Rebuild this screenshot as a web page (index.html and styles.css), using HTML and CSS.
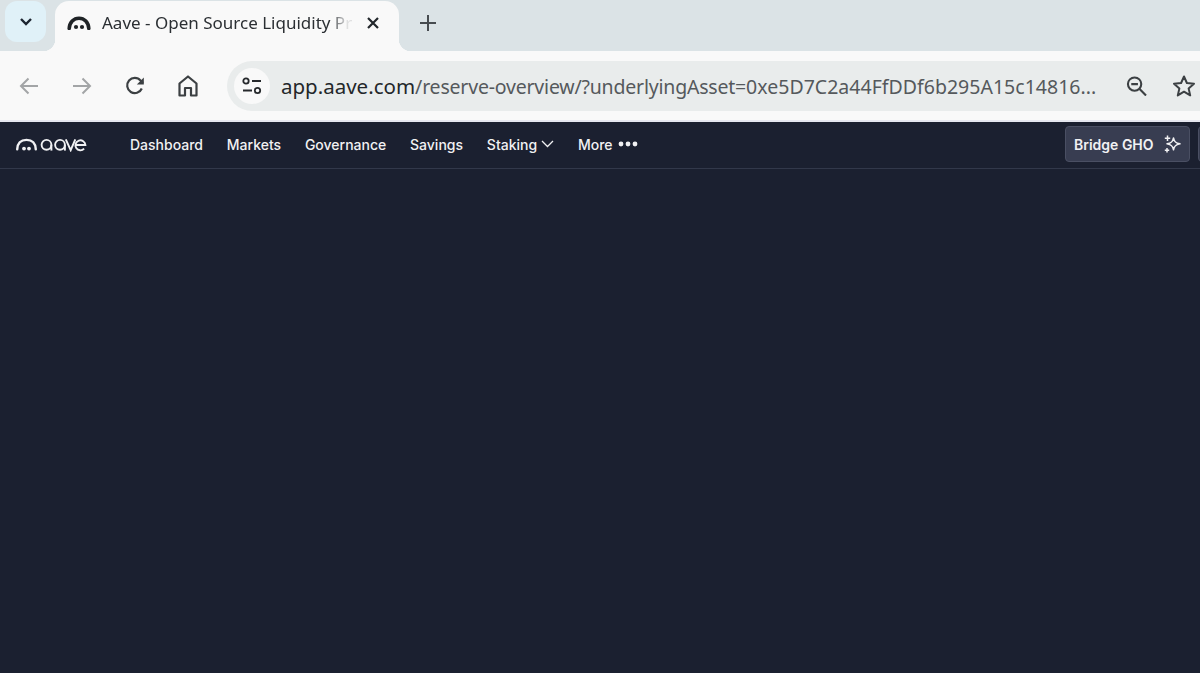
FILE: index.html
```html
<!DOCTYPE html>
<html lang="en">
<head>
<meta charset="utf-8">
<title>Aave - Open Source Liquidity Protocol</title>
<link rel="stylesheet" href="styles.css">
</head>
<body>
<div class="tabstrip">
  <button class="tabsearch" aria-label="Search tabs">
    <svg width="14" height="10" viewBox="0 0 14 10"><path d="M2 2l5 5 5-5" fill="none" stroke="#1c2430" stroke-width="2.4"/></svg>
  </button>
  <div class="tab">
    <svg class="favicon" width="24" height="14" viewBox="0 0 24 14"><path d="M2.2 12.500C2.600 6.400 6.600 2.200 12 2.200S21.400 6.400 21.800 12.500" fill="none" stroke="#1f2326" stroke-width="3.600" stroke-linecap="round"/><circle cx="9" cy="11" r="2.100" fill="#1f2326"/><circle cx="15" cy="11" r="2.100" fill="#1f2326"/></svg>
    <span class="tabtitle">Aave - Open Source Liquidity Pr</span>
    <svg class="tabclose" width="14" height="14" viewBox="0 0 14 14"><path d="M2 2l10 10M12 2L2 12" stroke="#22272b" stroke-width="2.200"/></svg>
  </div>
  <svg class="newtab" width="18" height="18" viewBox="0 0 18 18"><path d="M9 1v16M1 9h16" stroke="#474c50" stroke-width="2"/></svg>
</div>
<div class="toolbar">
  <svg class="navicon" width="20" height="18" viewBox="0 0 20 18"><path d="M19 9H2M9.500 1.500L2 9l7.500 7.500" fill="none" stroke="#a3a5a7" stroke-width="2"/></svg>
  <svg class="navicon forward" width="20" height="18" viewBox="0 0 20 18"><path d="M1 9h17M10.500 1.500L18 9l-7.500 7.500" fill="none" stroke="#a3a5a7" stroke-width="2"/></svg>
  <svg class="navicon reload" width="20" height="20" viewBox="0 0 20 20"><path d="M16.800 12.500A7.600 7.600 0 1 1 15.600 4.600L18 7" fill="none" stroke="#3c4043" stroke-width="2.200"/><path d="M18.800 1.500V8.500H11.800Z" fill="#3c4043"/></svg>
  <svg class="navicon home" width="20" height="22" viewBox="0 0 20 22"><path d="M1.500 20.500V8.500L10 1.500l8.500 7v12h-5.500v-7.500H7v7.500Z" fill="none" stroke="#3c4043" stroke-width="2.200" stroke-linejoin="round"/></svg>
  <div class="omnibox">
    <span class="siteinfo">
      <svg width="20" height="18" viewBox="0 0 20 18"><circle cx="4" cy="4" r="2.700" fill="none" stroke="#26292c" stroke-width="1.800"/><path d="M10 4h9M1 13.500h9" stroke="#26292c" stroke-width="2"/><circle cx="15.500" cy="13.500" r="2.700" fill="none" stroke="#26292c" stroke-width="1.800"/></svg>
    </span>
    <span class="url"><span class="host">app.aave.com</span><span class="path">/reserve-overview/?underlyingAsset=<span class="addr">0xe5D7C2a44FfDDf6b295A15c14816...</span></span></span>
    <svg class="zoomicon" width="21" height="20" viewBox="0 0 22 21"><circle cx="9" cy="8.500" r="7" fill="none" stroke="#3c4043" stroke-width="2.200"/><path d="M5.500 8.500h7M14 13.500l7 7" stroke="#3c4043" stroke-width="2.200"/></svg>
    <svg class="star" width="24" height="24" viewBox="0 0 24 24"><path d="M12 2.500l2.900 6.500 7.100.7-5.400 4.700 1.600 7-6.200-3.700-6.200 3.700 1.600-7L2 9.700l7.100-.7Z" fill="none" stroke="#3c4043" stroke-width="2" stroke-linejoin="round"/></svg>
  </div>
</div>
<div class="divider"></div>
<header class="appbar">
  <svg class="logo" width="72" height="15" viewBox="0 0 72 15" aria-label="aave">
    <path d="M2.200 12.400C2.500 6.200 5.900 2.900 11.500 2.900s9 3.300 9.300 9.500" fill="none" stroke="#f1f1f3" stroke-width="2.400" stroke-linecap="round"/>
    <circle cx="9" cy="11.600" r="1.900" fill="#f1f1f3"/><circle cx="14" cy="11.600" r="1.900" fill="#f1f1f3"/>
    <circle cx="31.500" cy="7.800" r="4.900" fill="none" stroke="#f1f1f3" stroke-width="1.900"/>
    <path d="M36.400 7.800v5.800" fill="none" stroke="#f1f1f3" stroke-width="1.900"/>
    <circle cx="45" cy="7.800" r="4.900" fill="none" stroke="#f1f1f3" stroke-width="1.900"/>
    <path d="M49.900 7.800v5.800" fill="none" stroke="#f1f1f3" stroke-width="1.900"/>
    <path d="M50.800 2.300l4.900 10.900 4.600-10.900" fill="none" stroke="#f1f1f3" stroke-width="1.900"/>
    <path d="M60.500 8h9.900a5 5 0 1 0-1.300 3.700" fill="none" stroke="#f1f1f3" stroke-width="1.900"/>
  </svg>
  <nav class="mainnav">
    <a class="navlink">Dashboard</a>
    <a class="navlink">Markets</a>
    <a class="navlink">Governance</a>
    <a class="navlink">Savings</a>
    <a class="navlink">Staking<svg class="caret" width="13" height="8" viewBox="0 0 13 8"><path d="M1 1l5.500 5.500L12 1" fill="none" stroke="#f1f1f3" stroke-width="1.300"/></svg></a>
    <a class="navlink">More<svg class="dots" width="20" height="6" viewBox="0 0 20 6"><circle cx="3" cy="3" r="2.400" fill="#f1f1f3"/><circle cx="10" cy="3" r="2.400" fill="#f1f1f3"/><circle cx="17" cy="3" r="2.400" fill="#f1f1f3"/></svg></a>
  </nav>
  <div class="appactions">
    <button class="bridge">Bridge GHO
      <svg width="18" height="18" viewBox="0 0 18 18"><path d="M10.500 3c.7 3.700 2.100 5.100 6.500 5.800-4.400.7-5.800 2.200-6.500 6-.7-3.800-2.100-5.300-6.500-6 4.400-.7 5.800-2.100 6.500-5.800Z" fill="none" stroke="#f1f1f3" stroke-width="1.500" stroke-linejoin="round"/><path d="M4.500 .5v5.500M1.800 3.200h5.400M4 13v4.500M1.800 15.200h4.400" stroke="#f1f1f3" stroke-width="1.500"/></svg>
    </button>
    <span class="nextbtn"></span>
  </div>
</header>
<main class="content"></main>
</body>
</html>
```
FILE: styles.css
```css
* { box-sizing: border-box; }
html, body { margin: 0; padding: 0; height: 100%; overflow: hidden; }
body { display: flex; flex-direction: column; width: 1200px; height: 673px; background: #1b2030; font-family: "Noto Sans", sans-serif; }

.tabstrip { flex: none; height: 51px; background: #dbe3e6; display: flex; align-items: flex-start; padding: 1px 0 0 5px; }
.tabsearch { flex: none; width: 41px; height: 41px; border: 0; padding: 0; border-radius: 12px; background: #e0f1f8; display: flex; align-items: center; justify-content: center; }
.tab { position: relative; flex: none; width: 344px; height: 50px; margin-left: 9px; background: #f9f9f9; border-radius: 14px 14px 0 0; display: flex; align-items: center; padding: 0 0 6px 12px; }
.tab::before, .tab::after { content: ""; position: absolute; bottom: 0; width: 12px; height: 12px; }
.tab::before { left: -12px; background: radial-gradient(circle at 0 0, transparent 12px, #f9f9f9 12.500px); }
.tab::after { right: -12px; background: radial-gradient(circle at 100% 0, transparent 12px, #f9f9f9 12.500px); }
.favicon { flex: none; }
.tabtitle { flex: none; width: 250px; margin-left: 11px; margin-bottom: 2px; font-size: 17px; color: #2b2f33; white-space: nowrap; -webkit-mask-image: linear-gradient(90deg, #000 91%, rgba(0,0,0,.12) 98%); mask-image: linear-gradient(90deg, #000 91%, rgba(0,0,0,.12) 98%); }
.tabclose { flex: none; margin-left: 14px; }
.newtab { flex: none; margin: 13px 0 0 20px; }

.toolbar { flex: none; height: 69px; background: #f9f9f9; display: flex; align-items: center; padding: 0 0 0 19px; }
.navicon { flex: none; }
.forward { margin-left: 33px; }
.reload { margin-left: 33px; }
.home { margin-left: 33px; }
.omnibox { flex: none; width: 1000px; height: 50px; margin-left: 29px; background: #e9ecec; border-radius: 25px; display: flex; align-items: center; padding: 0 0 0 7px; }
.siteinfo { flex: none; width: 36px; height: 36px; border-radius: 50%; background: #f9f9f9; display: flex; align-items: center; justify-content: center; }
.url { flex: none; width: 835px; margin-left: 11px; font-size: 20.500px; white-space: nowrap; }
.host { color: #23272a; }
.path { color: #55595c; font-size: 19.500px; letter-spacing: -0.200px; }
.addr { letter-spacing: 0.020px; }
.zoomicon { flex: none; margin-left: 10px; }
.star { flex: none; margin-left: 25px; }

.divider { flex: none; height: 2px; background: #e6e7f0; }

.appbar { flex: none; height: 47px; background: #1b2030; border-bottom: 1px solid #32384a; display: flex; align-items: center; padding: 0 0 2px 15px; font-family: Inter, sans-serif; overflow: hidden; }
.logo { flex: none; }
.mainnav { flex: none; display: flex; align-items: center; gap: 23.800px; margin-left: 43px; }
.navlink { display: flex; align-items: center; font-size: 14px; font-weight: 500; color: #f1f1f3; white-space: nowrap; }
.caret { margin-left: 4px; }
.dots { margin-left: 5px; }
.appactions { flex: none; margin-left: auto; display: flex; align-items: center; gap: 8px; margin-right: -12px; }
.bridge { width: 125px; height: 36px; padding: 0 0 0 8px; display: flex; align-items: center; gap: 9px; background: #383d51; border: 1px solid #4a4f63; border-radius: 4px; color: #f1f1f3; font: 600 14px Inter, sans-serif; white-space: nowrap; }
.nextbtn { display: block; width: 14px; height: 36px; background: #383d51; border-radius: 4px 0 0 4px; border: 1px solid #4a4f63; }
.content { flex: 1; background: #1b2030; }
```
